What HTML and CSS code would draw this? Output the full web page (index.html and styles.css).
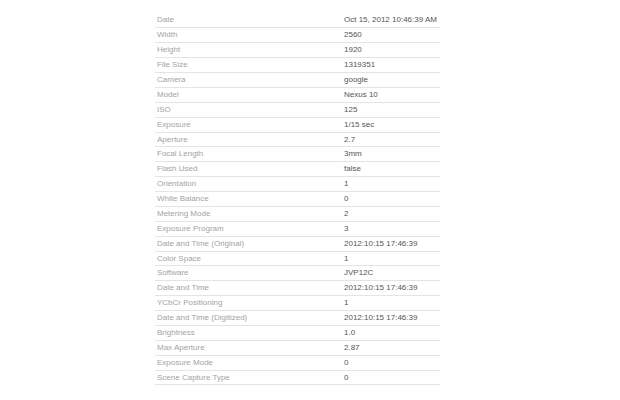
FILE: index.html
```html
<!DOCTYPE html>
<html>
<head>
<meta charset="utf-8">
<link rel="stylesheet" href="styles.css">
</head>
<body>
<table class="exif">
<tbody>
<tr><td class="k">Date</td><td class="v">Oct 15, 2012 10:46:39 AM</td></tr>
<tr><td class="k">Width</td><td class="v">2560</td></tr>
<tr><td class="k">Height</td><td class="v">1920</td></tr>
<tr><td class="k">File Size</td><td class="v">1319351</td></tr>
<tr><td class="k">Camera</td><td class="v">google</td></tr>
<tr><td class="k">Model</td><td class="v">Nexus 10</td></tr>
<tr><td class="k">ISO</td><td class="v">125</td></tr>
<tr><td class="k">Exposure</td><td class="v">1/15 sec</td></tr>
<tr><td class="k">Aperture</td><td class="v">2.7</td></tr>
<tr><td class="k">Focal Length</td><td class="v">3mm</td></tr>
<tr><td class="k">Flash Used</td><td class="v">false</td></tr>
<tr><td class="k">Orientation</td><td class="v">1</td></tr>
<tr><td class="k">White Balance</td><td class="v">0</td></tr>
<tr><td class="k">Metering Mode</td><td class="v">2</td></tr>
<tr><td class="k">Exposure Program</td><td class="v">3</td></tr>
<tr><td class="k">Date and Time (Original)</td><td class="v">2012:10:15 17:46:39</td></tr>
<tr><td class="k">Color Space</td><td class="v">1</td></tr>
<tr><td class="k">Software</td><td class="v">JVP12C</td></tr>
<tr><td class="k">Date and Time</td><td class="v">2012:10:15 17:46:39</td></tr>
<tr><td class="k">YCbCr Positioning</td><td class="v">1</td></tr>
<tr><td class="k">Date and Time (Digitized)</td><td class="v">2012:10:15 17:46:39</td></tr>
<tr><td class="k">Brightness</td><td class="v">1.0</td></tr>
<tr><td class="k">Max Aperture</td><td class="v">2.87</td></tr>
<tr><td class="k">Exposure Mode</td><td class="v">0</td></tr>
<tr><td class="k">Scene Capture Type</td><td class="v">0</td></tr>
</tbody>
</table>
</body>
</html>
```
FILE: styles.css
```css
html, body {
  margin: 0;
  padding: 0;
  background: #ffffff;
}
body {
  font-family: "Liberation Sans", Arial, sans-serif;
  font-size: 8px;
}
.exif {
  border-collapse: collapse;
  width: 285px;
  margin: 13px 0 0 155px;
  table-layout: fixed;
}
.exif tr {
  height: 14.875px;
}
.exif td {
  padding: 0 2px;
  border-bottom: 1px solid #e4e4e4;
  line-height: 13.875px;
  white-space: nowrap;
  vertical-align: middle;
}
.exif td.k {
  width: 183px;
  color: #a3a3a3;
}
.exif td.v {
  color: #555555;
}
```
